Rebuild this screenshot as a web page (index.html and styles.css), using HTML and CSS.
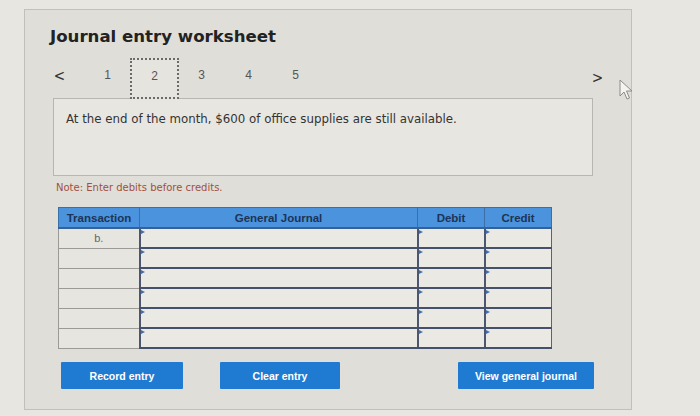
FILE: index.html
```html
<!DOCTYPE html>
<html>
<head>
<meta charset="utf-8">
<link rel="stylesheet" href="styles.css">
</head>
<body>
<div class="panel">
  <h1 class="title">Journal entry worksheet</h1>
  <div class="nav">
    <span class="arrow">&lt;</span>
    <div class="steps">
      <span class="step">1</span>
      <span class="step active">2</span>
      <span class="step">3</span>
      <span class="step">4</span>
      <span class="step">5</span>
    </div>
    <span class="arrow next">&gt;</span>
  </div>
  <div class="prompt">At the end of the month, $600 of office supplies are still available.</div>
  <div class="note">Note: Enter debits before credits.</div>
  <table class="journal">
    <thead>
      <tr><th class="c-tr">Transaction</th><th class="c-gj">General Journal</th><th class="c-db">Debit</th><th class="c-cr">Credit</th></tr>
    </thead>
    <tbody>
      <tr><td class="tr">b.</td><td class="in"></td><td class="in"></td><td class="in"></td></tr>
      <tr><td class="tr"></td><td class="in"></td><td class="in"></td><td class="in"></td></tr>
      <tr><td class="tr"></td><td class="in"></td><td class="in"></td><td class="in"></td></tr>
      <tr><td class="tr"></td><td class="in"></td><td class="in"></td><td class="in"></td></tr>
      <tr><td class="tr"></td><td class="in"></td><td class="in"></td><td class="in"></td></tr>
      <tr><td class="tr"></td><td class="in"></td><td class="in"></td><td class="in"></td></tr>
    </tbody>
  </table>
  <div class="buttons">
    <button class="btn b-record">Record entry</button>
    <button class="btn b-clear">Clear entry</button>
    <button class="btn b-view">View general journal</button>
  </div>
</div>
<svg class="cursor" width="14" height="22" viewBox="0 0 14 22"><path d="M1 1 L1 17 L5 13 L8 20 L10.5 19 L7.5 12 L13 12 Z" fill="#f4f3f0" stroke="#8e8c88" stroke-width="1"/></svg>
</body>
</html>
```
FILE: styles.css
```css
html, body {
  margin: 0;
  padding: 0;
}
body {
  background: #e8e6e1;
  width: 700px;
  height: 416px;
  overflow: hidden;
  position: relative;
  padding: 9px 0 0 24px;
  box-sizing: border-box;
  font-family: "DejaVu Sans", Verdana, sans-serif;
}
.panel {
  width: 608px;
  height: 401px;
  box-sizing: border-box;
  border: 1px solid #c2c0bb;
  background: #e0ded8;
  padding: 0 0 0 25px;
}
.title {
  margin: 16px 0 0 0;
  font-size: 16.6px;
  font-weight: bold;
  color: #222;
  line-height: 22px;
}
.nav {
  display: flex;
  align-items: center;
  height: 41px;
  margin-top: 10px;
  width: 551px;
}
.arrow {
  font-family: "DejaVu Sans", sans-serif;
  font-size: 16px;
  color: #333;
  width: 10px;
  margin-left: 3px;
  padding-bottom: 7px;
  transform: scaleX(0.85);
}
.steps {
  display: flex;
  margin-left: 21px;
  flex: 1;
}
.step {
  width: 47px;
  height: 41px;
  box-sizing: border-box;
  display: flex;
  align-items: center;
  justify-content: center;
  padding-bottom: 8px;
  font-family: "Liberation Sans", Arial, sans-serif;
  font-size: 12px;
  color: #555;
}
.step.active {
  border: 2px dotted #6a6a6a;
  width: 49px;
  margin: 0 -1px;
  padding-bottom: 6px;
  background: #e6e4df;
}
.arrow.next {
  margin-left: 0;
  padding-bottom: 2px;
}
.prompt {
  margin-left: 3px;
  margin-top: -1px;
  width: 540px;
  height: 78px;
  box-sizing: border-box;
  border: 1px solid #b8b6b1;
  background: #e8e6e1;
  padding: 13px 0 0 12px;
  font-size: 11.8px;
  color: #333;
}
.note {
  margin: 6px 0 0 6px;
  font-size: 10px;
  color: #a0503f;
  height: 14px;
}
.journal {
  margin: 11px 0 0 8px;
  border-collapse: collapse;
  table-layout: fixed;
  width: 493px;
}
.journal th {
  background: #4b93dc;
  color: #1c3457;
  font-family: "Liberation Sans", Arial, sans-serif;
  font-size: 11.5px;
  font-weight: bold;
  height: 19px;
  padding: 0;
  border: 1px solid #3a6fa8;
  border-bottom: 2px solid #35609a;
}
.c-tr { width: 80px; }
.c-gj { width: 277px; }
.c-db { width: 66px; }
.c-cr { width: 66px; }
.journal td {
  height: 18px;
  padding: 0;
  position: relative;
}
.journal td.tr {
  background: #e7e5df;
  border: 1px solid #9c9a96;
  font-family: "Liberation Sans", Arial, sans-serif;
  font-size: 11px;
  color: #666;
  text-align: center;
}
.journal td.in {
  background: #ebe9e4;
  border-left: 2px solid #4d5670;
  border-right: 1px solid #5a6278;
  border-bottom: 2px solid #45506c;
  border-top: 0;
}
.journal td.in::before {
  content: "";
  position: absolute;
  left: 0;
  top: 1px;
  border-left: 4px solid #3d6fb3;
  border-top: 2px solid transparent;
  border-bottom: 2px solid transparent;
}
.buttons {
  display: flex;
  margin-top: 13px;
  margin-left: 11px;
}
.btn {
  height: 27px;
  border: 0;
  background: #1f7bd2;
  color: #fff;
  font-family: "Liberation Sans", Arial, sans-serif;
  font-weight: bold;
  font-size: 10.5px;
  padding: 0;
  border-radius: 1px;
}
.b-record { width: 122px; }
.b-clear { width: 120px; margin-left: 37px; }
.b-view { width: 136px; margin-left: 118px; }
.cursor {
  position: absolute;
  left: 619px;
  top: 79px;
}
```
